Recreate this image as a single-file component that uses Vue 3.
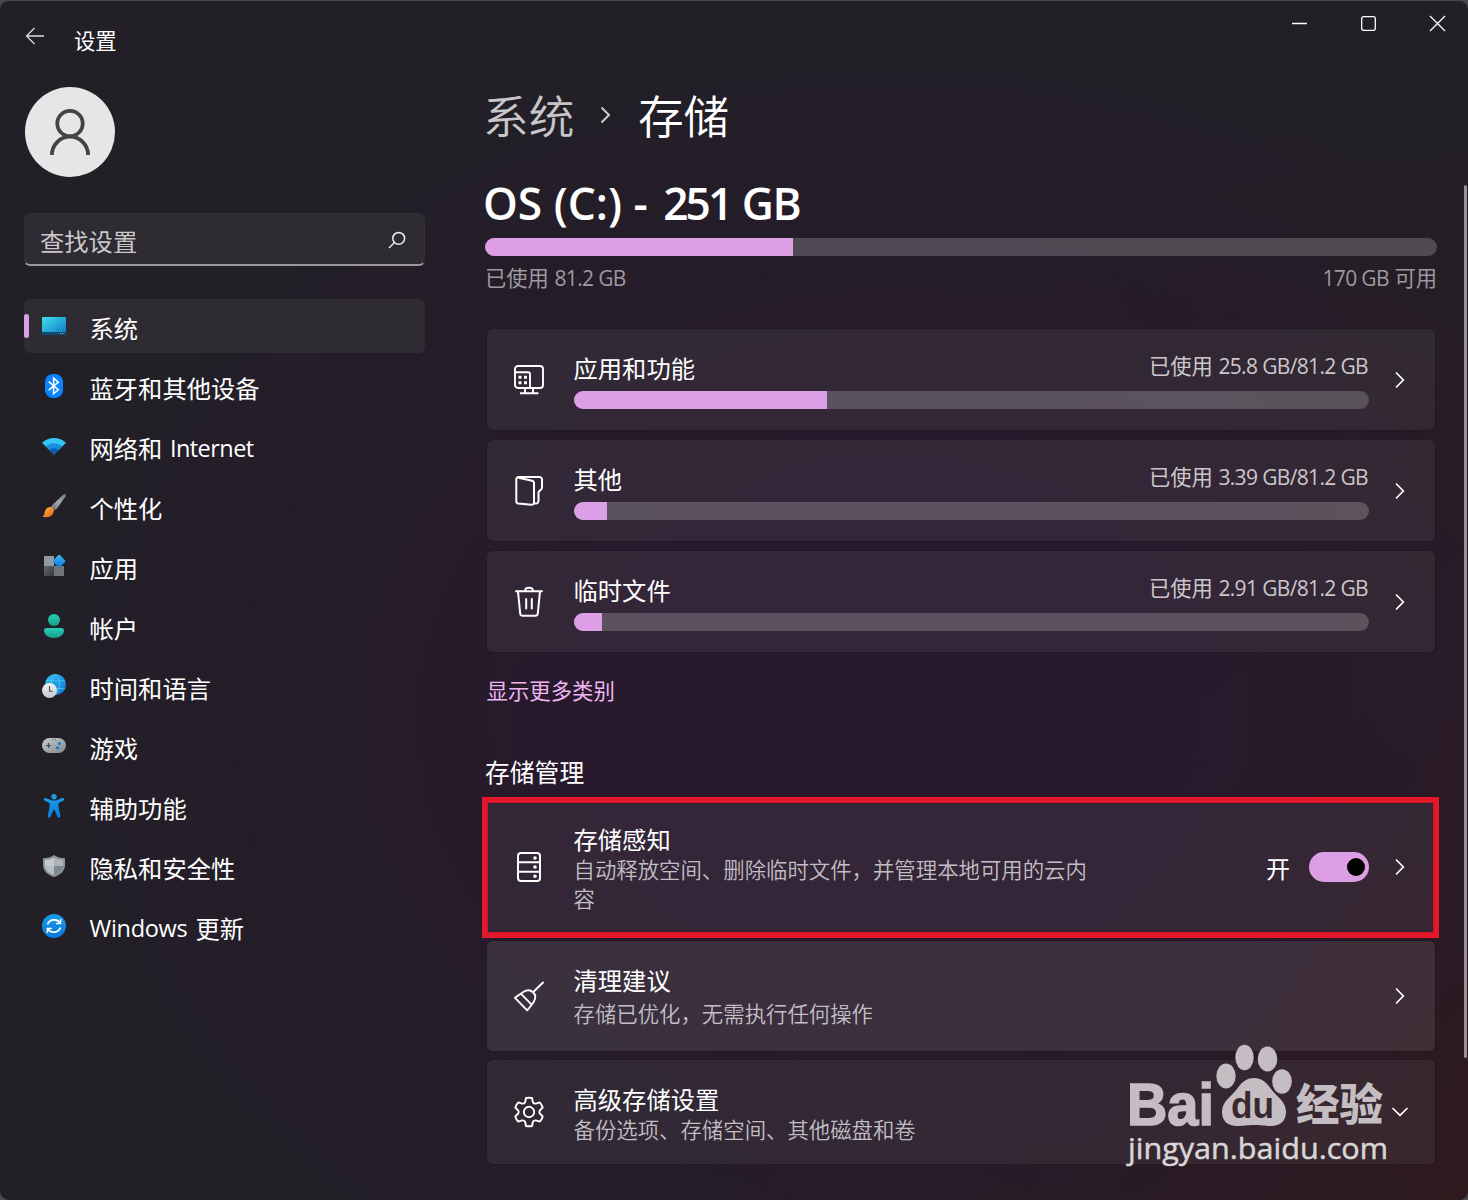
<script setup>
// Settings window: storage page with navigation, usage cards and storage management.
import { ref } from "vue";

const navItems = [
    { icon: "system", label: "系统" },
    { icon: "bluetooth", label: "蓝牙和其他设备" },
    { icon: "network", label: "网络和", latin: "Internet" },
    { icon: "brush", label: "个性化" },
    { icon: "apps", label: "应用" },
    { icon: "account", label: "帐户" },
    { icon: "time", label: "时间和语言" },
    { icon: "gaming", label: "游戏" },
    { icon: "access", label: "辅助功能" },
    { icon: "shield", label: "隐私和安全性" },
    { icon: "update", latinFirst: "Windows", label: "更新" },
];
const activeNav = ref("system");

const categories = [
    { icon: "monitor", title: "应用和功能", used: "25.8 GB/81.2 GB", fill: 253 },
    { icon: "folder", title: "其他", used: "3.39 GB/81.2 GB", fill: 33 },
    { icon: "trash", title: "临时文件", used: "2.91 GB/81.2 GB", fill: 28 },
];

const senseOn = ref(true);
</script>

<template>
    <div class="window">
        <svg class="sprite" aria-hidden="true">
            <defs>
                <linearGradient id="g-screen" x1="0" y1="0" x2="1" y2="1">
                    <stop offset="0" stop-color="#3fe0e6" />
                    <stop offset="1" stop-color="#1173c8" />
                </linearGradient>
                <linearGradient id="g-handle" x1="1" y1="0" x2="0" y2="1">
                    <stop offset="0" stop-color="#727b83" />
                    <stop offset=".5" stop-color="#a3abb2" />
                    <stop offset="1" stop-color="#606970" />
                </linearGradient>
                <linearGradient id="g-bristle" x1="0" y1="0" x2="1" y2="1">
                    <stop offset="0" stop-color="#ffc04a" />
                    <stop offset="1" stop-color="#e8590c" />
                </linearGradient>
                <linearGradient id="g-blue" x1="0" y1="0" x2="1" y2="1">
                    <stop offset="0" stop-color="#3cc0f5" />
                    <stop offset="1" stop-color="#0a73d8" />
                </linearGradient>
                <linearGradient id="g-azure" x1="0" y1="0" x2="0" y2="1">
                    <stop offset="0" stop-color="#1a9be8" />
                    <stop offset="1" stop-color="#0a78da" />
                </linearGradient>
                <linearGradient id="g-teal" x1="0" y1="0" x2="0" y2="1">
                    <stop offset="0" stop-color="#28cdb4" />
                    <stop offset="1" stop-color="#13a08c" />
                </linearGradient>
                <linearGradient id="g-grey" x1="0" y1="0" x2="1" y2="1">
                    <stop offset="0" stop-color="#c6ccd1" />
                    <stop offset="1" stop-color="#7d868d" />
                </linearGradient>
                <linearGradient id="g-dark" x1="0" y1="0" x2="1" y2="1">
                    <stop offset="0" stop-color="#62676b" />
                    <stop offset="1" stop-color="#35393c" />
                </linearGradient>
                <linearGradient id="g-clock" x1="0" y1="0" x2="0" y2="1">
                    <stop offset="0" stop-color="#f2f2f2" />
                    <stop offset="1" stop-color="#c3c7ca" />
                </linearGradient>
            </defs>
            <symbol id="i-system" viewBox="0 0 24 24">
                <rect y="3" width="24" height="18" rx="1" fill="url(#g-screen)" />
                <path d="M0 18h24v2a1 1 0 0 1-1 1H1a1 1 0 0 1-1-1z" fill="#0e4c6e" />
                <path d="M18 19h1v1h-1zM20.300 19h1v1h-1z" fill="#9fd6e8" />
            </symbol>
            <symbol id="i-bluetooth" viewBox="0 0 24 24">
                <rect x="3" width="18" height="24" rx="8" fill="#0a84ff" />
                <path d="M6.700 7.700l9.600 8-4.700 4V4.200l4.700 4-9.600 8" fill="none" stroke="#fff" stroke-width="1.500" />
            </symbol>
            <symbol id="i-network" viewBox="0 0 24 24">
                <path d="M12 20.500L0 8.800C6.500 2.300 17.500 2.300 24 8.800z" fill="#35c6f5" />
                <path d="M12 20.500L3.700 12.500c4.500-4.500 12.100-4.500 16.600 0z" fill="#1a8fe0" />
                <path d="M12 20.500l-4.600-4.400c2.500-2.500 6.700-2.500 9.200 0z" fill="#0b5cad" />
            </symbol>
            <symbol id="i-brush" viewBox="0 0 24 24">
                <path d="M21.500.4c1.600-.9 2.800.5 2 2L13.600 16.300l-4.600-4z" fill="url(#g-handle)" />
                <path d="M9.200 13c2.800.2 3.500 3.100 2.300 5.400C9.800 23 4.500 24.300.3 22.500c2.700-.9 1.700-2.800 2.600-5.200C3.900 14.400 6.200 12.800 9.200 13z" fill="url(#g-bristle)" />
            </symbol>
            <symbol id="i-apps" viewBox="0 0 24 24">
                <path d="M3 2h9v10H2V3a1 1 0 0 1 1-1z" fill="#939ba2" />
                <path d="M2 12h10v10H3a1 1 0 0 1-1-1z" fill="url(#g-dark)" />
                <path d="M12 12h10v9a1 1 0 0 1-1 1h-9z" fill="#6f777d" />
                <rect x="12.300" y="2.300" width="9.600" height="9.600" rx="1" transform="rotate(45 17.100 7.100)" fill="url(#g-blue)" />
            </symbol>
            <symbol id="i-account" viewBox="0 0 24 24">
                <circle cx="12" cy="6" r="6" fill="url(#g-teal)" />
                <path d="M4.500 14h15A2.500 2.500 0 0 1 22 16.500C22 21 17.500 24 12 24S2 21 2 16.500A2.500 2.500 0 0 1 4.500 14z" fill="url(#g-teal)" />
            </symbol>
            <symbol id="i-time" viewBox="0 0 24 24">
                <circle cx="13.500" cy="10.500" r="10.500" fill="url(#g-blue)" />
                <path d="M3.800 6.700h19.400M5 14.600h18.200M13.500 0C8 6 8 15 13.500 21M13.500 0c5.500 6 5.500 15 0 21" fill="none" stroke="#4fd8ee" stroke-width=".8" opacity=".8" />
                <circle cx="7.500" cy="16.500" r="7.500" fill="url(#g-clock)" />
                <path d="M7.500 12v5.200h3.400" fill="none" stroke="#555" stroke-width="1.100" />
            </symbol>
            <symbol id="i-gaming" viewBox="0 0 24 24">
                <rect y="4" width="24" height="15" rx="7.500" fill="url(#g-grey)" />
                <path d="M6.500 9v5M4 11.500h5" stroke="#42474b" stroke-width="1.200" />
                <path d="M10.500 5.500h1M13 5.500h1" stroke="#555" />
                <circle cx="17.500" cy="9.500" r="1.500" fill="#0b78d8" />
                <circle cx="15.500" cy="13.700" r="1.500" fill="#0b78d8" />
            </symbol>
            <symbol id="i-access" viewBox="0 0 24 24">
                <circle cx="12" cy="2.700" r="2.700" fill="#1a9be8" />
                <path d="M3.700 4.100L9 6.100q3 1 6 0l5.300-2c1.900-.5 2.400 2 .9 2.700l-4.700 2.100v4l1.900 9c.2 2-2.300 2.700-3 .8L12.500 16h-1l-2.900 6.700c-.7 1.900-3.200 1.200-3-.8l1.900-9v-4L2.800 6.800c-1.500-.7-1-3.200.9-2.700z" fill="url(#g-azure)" />
            </symbol>
            <symbol id="i-shield" viewBox="0 0 24 24">
                <path d="M12 1c3.500 2.600 6.500 3.200 11 3.200v7C23 16.500 18.500 21 12 23 5.500 21 1 16.500 1 11.200v-7C5.500 4.200 8.500 3.600 12 1z" fill="#8d959b" />
                <path d="M12 3.300c2.700 1.800 5.200 2.600 9 2.700V12h-9z" fill="#adb5ba" />
                <path d="M12 3.300C9.300 5.100 6.800 5.900 3 6v6h9z" fill="#c3c9cd" />
                <path d="M3 12h9v9C7 19.300 3.200 16 3 12z" fill="#b7bec3" />
                <path d="M21 12h-9v9c5-1.700 8.800-5 9-9z" fill="#80888e" />
            </symbol>
            <symbol id="i-update" viewBox="0 0 24 24">
                <circle cx="12" cy="12" r="12" fill="url(#g-azure)" />
                <path d="M5.500 10.500C7.300 5.300 14.500 4 18 8.700M18.500 13.500C16.700 18.700 9.500 20 6 15.300" fill="none" stroke="#fff" stroke-width="1.700" />
                <path d="M18.600 5v4.500H14M5.400 19v-4.500H10" fill="none" stroke="#fff" stroke-width="1.500" />
            </symbol>
            <symbol id="i-monitor" viewBox="0 0 32 32">
                <g fill="none" stroke="#fff" stroke-width="1.900">
                    <rect x="2" y="2" width="28" height="22" rx="3" />
                    <path d="M2 8.200h13a2 2 0 0 1 2 2V24M12 24v5M20 24v5M7 29.200h18.500" />
                </g>
                <path d="M5.500 11.700h3v3h-3zM11 11.700h3v3h-3zM5.500 17.300h3v3h-3zM11 17.300h3v3h-3z" fill="#fff" />
            </symbol>
            <symbol id="i-folder" viewBox="0 0 32 32">
                <g fill="none" stroke="#fff" stroke-width="2" stroke-linejoin="round">
                    <path d="M5.500 2.700l13.600 3.100a2.400 2.400 0 0 1 1.900 2.400v19.300a2.300 2.300 0 0 1-2.600 2.300L5.300 28.500a2.300 2.300 0 0 1-2-2.300V4.300A2.200 2.200 0 0 1 5.500 2h20.800A2.500 2.500 0 0 1 29 4.600v8.100c0 2.700-3.500 2.700-3.500 4.800v8.600a2.500 2.500 0 0 1-2.500 2.500h-2.300" />
                </g>
            </symbol>
            <symbol id="i-trash" viewBox="0 0 32 32">
                <g fill="none" stroke="#fff" stroke-width="2" stroke-linecap="round" stroke-linejoin="round">
                    <path d="M3 5.300h26M12 5c0-4.500 8-4.500 8 0M5 5.500l2.200 22a2.500 2.500 0 0 0 2.500 2.300h12.600a2.500 2.500 0 0 0 2.500-2.300l2.200-22M13.200 13v9.500M18.800 13v9.500" />
                </g>
            </symbol>
            <symbol id="i-drive" viewBox="0 0 32 32">
                <g fill="none" stroke="#fff" stroke-width="2">
                    <rect x="5" y="2" width="22" height="28" rx="3" />
                    <path d="M5 11.300h22M5 20.700h22" />
                </g>
                <circle cx="22" cy="7" r="1.800" fill="#fff" />
                <circle cx="22" cy="16" r="1.800" fill="#fff" />
                <circle cx="22" cy="25.200" r="1.800" fill="#fff" />
            </symbol>
            <symbol id="i-broom" viewBox="0 0 32 32">
                <g fill="none" stroke="#fff" stroke-width="1.900" stroke-linecap="round" stroke-linejoin="round">
                    <path d="M30 2.500L20 12.300M2 17.800l12.200 12.500c2-2.200 4.200-5 6.400-8.300 2.400-3.800 2-7.500-.6-9.700-2.400-2.200-6-2.600-9.300-.5C7.500 13.800 5 15.500 2 17.800zM7.800 13.700l10.800 11" />
                </g>
            </symbol>
            <symbol id="i-gear" viewBox="0 0 32 32">
                <g fill="none" stroke="#fff" stroke-width="1.900" stroke-linejoin="round">
                    <path d="M13 2q3-.6 6 0l.9 4.200q1 1.700 3 1.400l3.800-1.200q2.200 2.300 3 5.200l-2.900 2.900q-1.200 1.500 0 3l2.900 2.900q-.8 2.900-3 5.200l-3.800-1.200q-2-.3-3 1.400L19 30q-3 .6-6 0l-.9-4.200q-1-1.700-3-1.400l-3.800 1.200q-2.200-2.300-3-5.200l2.900-2.900q1.200-1.500 0-3l-2.900-2.900q.8-2.900 3-5.200l3.800 1.200q2 .3 3-1.400z" />
                    <circle cx="16" cy="16" r="5.200" />
                </g>
            </symbol>
            <symbol id="i-chevron" viewBox="0 0 10 18">
                <path d="M1 1.500L8.300 9 1 16.500" fill="none" stroke="#fff" stroke-width="1.700" />
            </symbol>
        </svg>

        <header class="titlebar">
            <svg class="back" viewBox="0 0 20 18">
                <path d="M19 9H1.500M9.500 1L1.500 9l8 8" fill="none" stroke="#ddd" stroke-width="1.300" />
            </svg>
            <span class="app-name">设置</span>
            <svg class="controls" viewBox="0 0 156 18">
                <g fill="none" stroke="#fff" stroke-width="1.300">
                    <path d="M1 9.500h15" />
                    <rect x="70.700" y="2.700" width="13.600" height="13.600" rx="2" />
                    <path d="M139 2l15 15M154 2l-15 15" />
                </g>
            </svg>
        </header>

        <div class="body">
            <aside class="sidebar">
                <div class="avatar">
                    <svg viewBox="0 0 90 90">
                        <g fill="none" stroke="#444" stroke-width="3.800">
                            <circle cx="45" cy="36.500" r="12.700" />
                            <path d="M26.900 68c0-10 8-18.300 18.100-18.300S63.100 58 63.100 68" />
                        </g>
                    </svg>
                </div>
                <div class="search">
                    <span>查找设置</span>
                    <svg viewBox="0 0 18 18">
                        <g fill="none" stroke="#eee" stroke-width="1.500">
                            <circle cx="10.700" cy="7.300" r="5.900" />
                            <path d="M6.500 11.500L1 17" />
                        </g>
                    </svg>
                </div>
                <nav>
                    <a
                        v-for="item in navItems"
                        :key="item.icon"
                        class="nav-item"
                        :class="{ active: item.icon === activeNav }"
                        @click="activeNav = item.icon"
                    >
                        <svg class="nav-icon"><use :href="`#i-${item.icon}`" /></svg>
                        <span class="nav-label">
                            <span v-if="item.latinFirst" class="latin before">{{ item.latinFirst }}</span>
                            <span>{{ item.label }}</span>
                            <span v-if="item.latin" class="latin after">{{ item.latin }}</span>
                        </span>
                    </a>
                </nav>
            </aside>

            <main class="content">
                <h1 class="crumbs">
                    <span class="parent">系统</span>
                    <svg viewBox="0 0 10 18"><path d="M1 1.500L8.500 9 1 16.500" fill="none" stroke="#ccc" stroke-width="2" /></svg>
                    <span>存储</span>
                </h1>
                <h2 class="drive">OS (C:) - <span class="size">251</span> <span class="unit">GB</span></h2>
                <div class="bar drive-bar"><i class="drive-fill" /></div>
                <div class="drive-labels">
                    <span>已使用 <b>81.2 GB</b></span>
                    <span><b>170 GB</b> 可用</span>
                </div>

                <section class="categories">
                    <div v-for="cat in categories" :key="cat.icon" class="card">
                        <svg class="card-icon"><use :href="`#i-${cat.icon}`" /></svg>
                        <div class="usage">
                            <div class="usage-head">
                                <span class="title">{{ cat.title }}</span>
                                <span class="used">已使用 <b>{{ cat.used }}</b></span>
                            </div>
                            <div class="bar"><i :style="{ width: cat.fill + 'px' }" /></div>
                        </div>
                        <svg class="chevron"><use href="#i-chevron" /></svg>
                    </div>
                </section>
                <a class="more">显示更多类别</a>

                <h3 class="section-title">存储管理</h3>
                <div class="highlight">
                    <div class="card sense">
                        <svg class="card-icon"><use href="#i-drive" /></svg>
                        <div class="text">
                            <span class="title">存储感知</span>
                            <span class="desc">自动释放空间、删除临时文件，并管理本地可用的云内容</span>
                        </div>
                        <span class="state">{{ senseOn ? "开" : "关" }}</span>
                        <button
                            type="button"
                            class="switch"
                            :class="{ on: senseOn }"
                            role="switch"
                            aria-label="存储感知"
                            :aria-checked="senseOn"
                            @click="senseOn = !senseOn"
                        >
                            <span class="knob" />
                        </button>
                        <svg class="chevron"><use href="#i-chevron" /></svg>
                    </div>
                </div>
                <div class="card cleanup">
                    <svg class="card-icon"><use href="#i-broom" /></svg>
                    <div class="text">
                        <span class="title">清理建议</span>
                        <span class="desc">存储已优化，无需执行任何操作</span>
                    </div>
                    <svg class="chevron"><use href="#i-chevron" /></svg>
                </div>
                <div class="card advanced">
                    <svg class="card-icon"><use href="#i-gear" /></svg>
                    <div class="text">
                        <span class="title">高级存储设置</span>
                        <span class="desc">备份选项、存储空间、其他磁盘和卷</span>
                    </div>
                    <svg class="chevron down"><use href="#i-chevron" /></svg>
                </div>
            </main>
        </div>

        <div class="scrollbar" />

        <svg class="watermark" viewBox="0 0 270 130">
            <g fill="#c4bec2">
                <text x="2" y="83.500" class="wm-bold wm-thick" font-size="59" textLength="87" lengthAdjust="spacingAndGlyphs">Bai</text>
                <ellipse cx="101" cy="35" rx="9.700" ry="12.500" />
                <ellipse cx="119.500" cy="16.500" rx="9.200" ry="12.700" />
                <ellipse cx="142.500" cy="18" rx="9.800" ry="12.500" />
                <ellipse cx="157" cy="40.500" rx="9.800" ry="12.200" />
                <path d="M129 37c8 0 12 4 17 11 6 8 15 12 15 23 0 9-6 14-15 14-7 0-10-1-17-1s-10 1-17 1c-9 0-15-5-15-14 0-11 9-15 15-23 5-7 9-11 17-11z" />
                <text x="171" y="79.500" class="wm-cjk" font-size="44" textLength="87" lengthAdjust="spacingAndGlyphs">经验</text>
            </g>
            <text x="106" y="77" class="wm-bold" font-size="36" fill="#3a282f" textLength="43" lengthAdjust="spacingAndGlyphs">du</text>
            <text x="3" y="118" class="wm-url" font-size="30" fill="#d9d6d7" textLength="260" lengthAdjust="spacingAndGlyphs">jingyan.baidu.com</text>
        </svg>
    </div>
</template>

<style>
body {
    margin: 0;
    background: #4a4a4a;
}
</style>

<style scoped>
.window {
    position: relative;
    box-sizing: border-box;
    width: 1468px;
    height: 1200px;
    overflow: hidden;
    border-top: 1px solid #4a494a;
    border-radius: 9px;
    background:
        radial-gradient(ellipse 850px 680px at 900px 720px, rgba(40, 25, 44, 1) 35%, rgba(40, 25, 44, 0) 100%),
        radial-gradient(ellipse 850px 1050px at 1500px 1130px, rgba(47, 26, 28, 1), rgba(44, 26, 34, 0) 100%),
        #221f27;
    color: #fff;
    font-family: "Open Sans", "Noto Sans CJK SC", sans-serif;
    font-size: 24px;
}
.sprite {
    position: absolute;
    width: 0;
    height: 0;
}
h1,
h2,
h3 {
    margin: 0;
    font-weight: 400;
}
b {
    font-size: 21px;
    font-weight: 400;
    letter-spacing: -0.650px;
}

.titlebar {
    display: flex;
    height: 86px;
    padding: 0 21px 0 25px;
}
.back {
    width: 20px;
    height: 18px;
    margin-top: 26px;
}
.app-name {
    margin: 24px 0 0 29px;
    font-size: 21.300px;
    line-height: 32px;
}
.controls {
    width: 156px;
    height: 18px;
    margin: 13px 0 0 auto;
}

.body {
    display: flex;
}
.sidebar {
    width: 401px;
    margin-left: 24px;
    flex: none;
}
.avatar {
    width: 90px;
    height: 90px;
    margin-left: 1px;
    border-radius: 50%;
    background: #e6e6e6;
}
.avatar svg {
    display: block;
}
.search {
    display: flex;
    box-sizing: border-box;
    align-items: center;
    justify-content: space-between;
    height: 53px;
    margin-top: 36px;
    padding: 5px 18px 0 15px;
    border: 1px solid #322e37;
    border-bottom: 2px solid #9a989c;
    border-radius: 6px;
    background: #2e2b33;
    color: #c9c8ca;
    font-size: 24.300px;
}
.search span {
    line-height: 40px;
}
.search svg {
    width: 18px;
    height: 18px;
    margin-top: -4px;
}
nav {
    display: flex;
    flex-direction: column;
    gap: 6px;
    margin-top: 33px;
}
.nav-item {
    position: relative;
    display: flex;
    align-items: center;
    height: 54px;
    padding-left: 18px;
    border-radius: 6px;
}
.nav-item.active {
    background: #2f2b33;
}
.nav-item.active::before {
    content: "";
    position: absolute;
    left: 0;
    top: 15px;
    width: 5px;
    height: 24px;
    border-radius: 3px;
    background: #dc9ee4;
}
.nav-icon {
    width: 24px;
    height: 24px;
}
.nav-label {
    display: flex;
    height: 40px;
    margin: 5px 0 0 23.500px;
    font-size: 24.300px;
    line-height: 40px;
}
.latin {
    margin-top: -1px;
    font-size: 23.500px;
    letter-spacing: -0.550px;
}
.latin.before {
    margin-right: 8px;
    letter-spacing: -0.300px;
}
.latin.after {
    margin-left: 7.500px;
}

.content {
    width: 952px;
    margin-left: 60px;
}
.crumbs {
    display: flex;
    align-items: center;
    height: 60px;
    margin-top: -1px;
    margin-left: -2px;
    font-size: 45.700px;
    font-weight: 350;
    line-height: 60px;
}
.crumbs .parent {
    color: #c8c6c9;
}
.crumbs svg {
    width: 11px;
    height: 18px;
    margin: -3px 26.500px 0 26px;
}
.drive {
    height: 60px;
    margin-top: 27px;
    margin-left: -2px;
    font-size: 44.300px;
    font-weight: 600;
    line-height: 60px;
    white-space: nowrap;
}
.drive .size {
    margin-left: 4px;
    letter-spacing: -3px;
}
.drive .unit {
    letter-spacing: -1.500px;
}
.bar {
    height: 18px;
    overflow: hidden;
    border-radius: 9px;
    background: rgba(255, 255, 255, 0.2);
}
.bar i {
    display: block;
    height: 100%;
    background: #dc9ee4;
}
.drive-bar {
    margin-top: 5px;
}
.drive-fill {
    width: 308px;
}
.drive-labels {
    display: flex;
    justify-content: space-between;
    height: 30px;
    margin-top: 7px;
    color: #9d999f;
    font-size: 21.300px;
    line-height: 30px;
}
.categories {
    display: flex;
    flex-direction: column;
    gap: 10px;
    margin-top: 36px;
}
.card {
    display: flex;
    box-sizing: border-box;
    align-items: center;
    height: 101px;
    margin: 0 2px;
    padding: 0 30px 0 26px;
    border-radius: 6px;
    background: rgba(255, 255, 255, 0.06);
    box-shadow: 0 0 0 1px rgba(0, 0, 0, 0.1);
}
.card-icon {
    width: 32px;
    height: 32px;
    flex: none;
}
.usage {
    width: 795px;
    margin-left: 29px;
}
.usage-head {
    display: flex;
    justify-content: space-between;
    height: 38px;
    margin-top: 3px;
}
.title {
    margin-left: -0.500px;
    font-size: 24.300px;
    line-height: 32px;
}
.used {
    margin: -2px 1px 0 0;
    color: #cbc7cb;
    font-size: 21.300px;
    line-height: 30px;
}
.chevron {
    width: 10px;
    height: 18px;
    margin-left: auto;
}
.chevron.down {
    transform: rotate(90deg);
}
.more {
    display: block;
    height: 32px;
    margin: 23px 0 0 1.500px;
    color: #edb5f2;
    font-size: 21.400px;
    line-height: 32px;
}
.section-title {
    height: 36px;
    margin-top: 47px;
    font-size: 24.800px;
    line-height: 36px;
}
.highlight {
    box-sizing: border-box;
    width: 957px;
    height: 141px;
    margin: 7px 0 0 -3px;
    border: 6px solid #e5172a;
}
.text {
    display: flex;
    flex-direction: column;
    width: 516px;
    margin-left: 29px;
}
.desc {
    margin-left: -0.500px;
    color: #c2bec3;
    font-size: 21.400px;
    font-weight: 350;
    line-height: 29px;
}
.sense {
    height: 129px;
    margin: 0;
    padding: 0 28px 2px 25px;
    border-radius: 0;
}
.sense .text {
    margin-top: 4px;
}
.sense .desc {
    margin-top: -1px;
}
.state {
    margin: 2px 19px 0 auto;
}
.switch {
    display: flex;
    box-sizing: border-box;
    align-items: center;
    width: 60px;
    height: 30px;
    padding: 0 4px;
    border: 0;
    border-radius: 15px;
    background: #5b505d;
}
.switch.on {
    justify-content: flex-end;
    background: #dc9ee4;
}
.knob {
    width: 18px;
    height: 18px;
    border-radius: 50%;
    background: #000;
}
.sense .chevron {
    margin-left: 26px;
}
.cleanup {
    height: 110px;
    margin-top: 3px;
    background: rgba(255, 255, 255, 0.095);
}
.cleanup .desc {
    margin-top: 2px;
}
.advanced {
    height: 104px;
    margin-top: 9px;
}
.advanced .text {
    margin-top: 3px;
}
.advanced .desc {
    margin-top: -1px;
}

.scrollbar {
    position: absolute;
    top: 184px;
    right: 1px;
    width: 3px;
    height: 873px;
    border-radius: 2px;
    background: #989196;
}
.watermark {
    position: absolute;
    left: 1125px;
    top: 1040px;
    width: 270px;
    height: 130px;
}
.wm-bold {
    font-family: "Liberation Sans", sans-serif;
    font-weight: 700;
}
.wm-cjk {
    font-family: "Noto Sans CJK SC", sans-serif;
    font-weight: 900;
}
.wm-thick {
    stroke: #c4bec2;
    stroke-width: 1.500px;
}
.wm-url {
    font-family: "Open Sans", sans-serif;
    font-weight: 500;
    stroke: #d9d6d7;
    stroke-width: 0.500px;
}
</style>
